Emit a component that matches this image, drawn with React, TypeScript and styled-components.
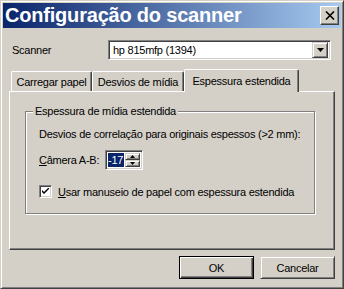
import { FC } from "react";
import styled, { createGlobalStyle } from "styled-components";

const GlobalStyle = createGlobalStyle`
  html, body {
    margin: 0;
    padding: 0;
    background: #d4d0c8;
  }
  body {
    font-family: "Liberation Sans", Arial, sans-serif;
    font-size: 11px;
    letter-spacing: -0.25px;
    color: #000;
  }
`;

const Window = styled.div`
  box-sizing: border-box;
  width: 344px;
  height: 289px;
  background: #d4d0c8;
  border: 1px solid;
  border-color: #d4d0c8 #404040 #404040 #d4d0c8;
  box-shadow: inset 1px 1px #fff, inset -1px -1px #808080;
  padding: 2px;
  display: flex;
  flex-direction: column;
`;

const TitleBar = styled.div`
  height: 25px;
  flex: none;
  display: flex;
  align-items: center;
  justify-content: space-between;
  padding: 0 2px 0 2px;
  background: linear-gradient(to right, #0a246a, #a6caf0);
`;

const Title = styled.div`
  color: #fff;
  font-weight: bold;
  font-size: 20px;
  letter-spacing: -0.2px;
  line-height: 25px;
  white-space: nowrap;
`;

const CloseButton = styled.div`
  box-sizing: border-box;
  width: 19px;
  height: 19px;
  background: #d4d0c8;
  border: 1px solid;
  border-color: #fff #404040 #404040 #fff;
  box-shadow: inset -1px -1px #808080;
  display: flex;
  align-items: center;
  justify-content: center;
`;

const Body = styled.div`
  flex: 1;
  display: flex;
  flex-direction: column;
  padding: 12px 6px 0 6px;
`;

const ScannerRow = styled.div`
  display: flex;
  align-items: center;
  height: 20px;
  padding-left: 3px;
`;

const FieldLabel = styled.div<{ $w: number }>`
  width: ${(p) => p.$w}px;
  flex: none;
  white-space: nowrap;
`;

const Sunken = styled.div`
  box-sizing: border-box;
  background: #fff;
  border: 1px solid;
  border-color: #808080 #fff #fff #808080;
  box-shadow: inset 1px 1px #404040, inset -1px -1px #d4d0c8;
  padding: 2px;
`;

const Combo = styled(Sunken)`
  width: 223px;
  height: 20px;
  display: flex;
  align-items: center;
  justify-content: space-between;
  padding-left: 4px;
`;

const RaisedButton = styled.div`
  box-sizing: border-box;
  background: #d4d0c8;
  border: 1px solid;
  border-color: #d4d0c8 #404040 #404040 #d4d0c8;
  box-shadow: inset 1px 1px #fff, inset -1px -1px #808080;
  display: flex;
  align-items: center;
  justify-content: center;
`;

const ComboArrow = styled(RaisedButton)`
  width: 16px;
  height: 16px;
`;

const Tabs = styled.div`
  margin-top: 9px;
  display: flex;
  flex-direction: column;
`;

const TabStrip = styled.div`
  display: flex;
  align-items: flex-end;
  height: 22px;
  padding-left: 2px;
`;

const Tab = styled.div<{ $active?: boolean; $w: number }>`
  position: relative;
  box-sizing: border-box;
  width: ${(p) => p.$w}px;
  height: ${(p) => (p.$active ? 23 : 20)}px;
  margin-bottom: ${(p) => (p.$active ? -1 : 0)}px;
  z-index: ${(p) => (p.$active ? 2 : 1)};
  background: #d4d0c8;
  border-top: 1px solid #fff;
  border-left: 1px solid #fff;
  border-right: 1px solid #404040;
  border-radius: 2px 2px 0 0;
  box-shadow: inset -1px 0 #808080;
  display: flex;
  align-items: center;
  justify-content: center;
  padding-top: ${(p) => (p.$active ? 0 : 1)}px;
  white-space: nowrap;
`;

const Panel = styled.div`
  box-sizing: border-box;
  width: 326px;
  height: 159px;
  border: 1px solid;
  border-color: #fff #404040 #404040 #fff;
  box-shadow: inset -1px -1px #808080;
  padding: 19px 0 0 15px;
`;

const GroupBox = styled.div`
  position: relative;
  box-sizing: border-box;
  width: 290px;
  height: 103px;
  border: 1px solid #808080;
  box-shadow: inset 1px 1px #fff, 1px 1px #fff;
  padding: 16px 0 0 13px;
`;

const GroupLabel = styled.div`
  position: absolute;
  top: -7px;
  left: 7px;
  padding: 0 2px;
  background: #d4d0c8;
  line-height: 13px;
`;

const Line = styled.div`
  line-height: 13px;
  white-space: nowrap;
`;

const SpinRow = styled.div`
  display: flex;
  align-items: center;
  height: 20px;
  margin-top: 9px;
`;

const Spin = styled(Sunken)`
  width: 38px;
  height: 20px;
  display: flex;
  align-items: stretch;
  padding: 2px 2px 2px 1px;
`;

const SpinValue = styled.div`
  flex: 1;
  display: flex;
  align-items: stretch;
  padding-left: 1px;
`;

const Selected = styled.span`
  display: flex;
  align-items: center;
  padding-right: 1px;
  background: #0a246a;
  color: #fff;
`;

const SpinButtons = styled.div`
  width: 15px;
  display: flex;
  flex-direction: column;
`;

const SpinButton = styled(RaisedButton)`
  flex: 1;
`;

const CheckRow = styled.div`
  display: flex;
  align-items: center;
  gap: 6px;
  margin-top: 15px;
  white-space: nowrap;
`;

const CheckBox = styled(Sunken)`
  width: 13px;
  height: 13px;
  padding: 0;
  display: flex;
  align-items: center;
  justify-content: center;
`;

const Footer = styled.div`
  display: flex;
  justify-content: flex-end;
  gap: 6px;
  margin-top: 6px;
`;

const Button = styled(RaisedButton)<{ $default?: boolean }>`
  width: 75px;
  height: 23px;
  ${(p) =>
    p.$default
      ? `border: 1px solid #000;
         box-shadow: inset 1px 1px #fff, inset -1px -1px #404040, inset -2px -2px #808080;`
      : ""}
`;

const Arrow: FC = () => (
  <svg width="7" height="4" viewBox="0 0 7 4">
    <path d="M0 0h7L3.5 4z" fill="#000" />
  </svg>
);

const SmallArrow: FC<{ up?: boolean }> = ({ up }) => (
  <svg width="5" height="3" viewBox="0 0 5 3">
    <path d={up ? "M2.5 0L5 3H0z" : "M0 0h5L2.5 3z"} fill="#000" />
  </svg>
);

export default function App() {
  return (
    <>
      <GlobalStyle />
      <Window>
        <TitleBar>
          <Title>Configuração do scanner</Title>
          <CloseButton>
            <svg width="10" height="9" viewBox="0 0 10 9">
              <path d="M1 0.5l8 8M9 0.5l-8 8" stroke="#000" strokeWidth="1.6" />
            </svg>
          </CloseButton>
        </TitleBar>
        <Body>
          <ScannerRow>
            <FieldLabel $w={96}>Scanner</FieldLabel>
            <Combo>
              <span>hp 815mfp (1394)</span>
              <ComboArrow>
                <Arrow />
              </ComboArrow>
            </Combo>
          </ScannerRow>
          <Tabs>
            <TabStrip>
              <Tab $w={81}>Carregar papel</Tab>
              <Tab $w={92}>Desvios de mídia</Tab>
              <Tab $w={115} $active>
                Espessura estendida
              </Tab>
            </TabStrip>
            <Panel>
              <GroupBox>
                <GroupLabel>Espessura de mídia estendida</GroupLabel>
                <Line>Desvios de correlação para originais espessos (&gt;2 mm):</Line>
                <SpinRow>
                  <FieldLabel $w={66}>
                    <u>C</u>âmera A-B:
                  </FieldLabel>
                  <Spin>
                    <SpinValue>
                      <Selected>-17</Selected>
                    </SpinValue>
                    <SpinButtons>
                      <SpinButton>
                        <SmallArrow up />
                      </SpinButton>
                      <SpinButton>
                        <SmallArrow />
                      </SpinButton>
                    </SpinButtons>
                  </Spin>
                </SpinRow>
                <CheckRow>
                  <CheckBox>
                    <svg width="7" height="7" viewBox="0 0 7 7">
                      <path d="M0 2l2 2 5-5v2l-5 5-2-2z" fill="#000" />
                    </svg>
                  </CheckBox>
                  <span>
                    <u>U</u>sar manuseio de papel com espessura estendida
                  </span>
                </CheckRow>
              </GroupBox>
            </Panel>
          </Tabs>
          <Footer>
            <Button $default>OK</Button>
            <Button>Cancelar</Button>
          </Footer>
        </Body>
      </Window>
    </>
  );
}
